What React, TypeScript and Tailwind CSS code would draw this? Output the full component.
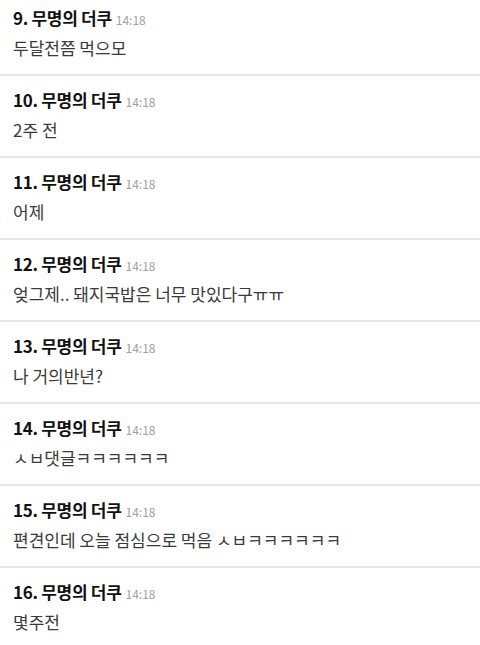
import React from 'react';

const comments = [
  { no: 9, text: '두달전쯤 먹으모' },
  { no: 10, text: '2주 전' },
  { no: 11, text: '어제' },
  { no: 12, text: '엊그제.. 돼지국밥은 너무 맛있다구ㅠㅠ' },
  { no: 13, text: '나 거의반년?' },
  { no: 14, text: 'ㅅㅂ댓글ㅋㅋㅋㅋㅋㅋ' },
  { no: 15, text: '편견인데 오늘 점심으로 먹음 ㅅㅂㅋㅋㅋㅋㅋㅋ' },
  { no: 16, text: '몇주전' },
];

export default function App() {
  return (
    <div
      className="w-[480px] h-[645px] overflow-hidden bg-white"
      style={{ fontFamily: '"Noto Sans CJK KR", "Noto Sans", sans-serif' }}
    >
      <div className="-mt-[6px]">
        {comments.map((c) => (
          <div key={c.no} className="h-[82px] border-b-2 border-[#e6e6e6] pl-[13px] pt-[13px]">
            <div className="flex items-baseline h-[22px] leading-[22px]">
              <span className="text-[17px] font-bold text-[#111] tracking-[-0.3px]">
                {c.no}. 무명의 더쿠
              </span>
              <span className="ml-[4px] text-[12px] text-[#a0a0a0]">14:18</span>
            </div>
            <div className="mt-[7px] text-[17px] leading-[24px] text-[#3a3a3a]">{c.text}</div>
          </div>
        ))}
      </div>
    </div>
  );
}
